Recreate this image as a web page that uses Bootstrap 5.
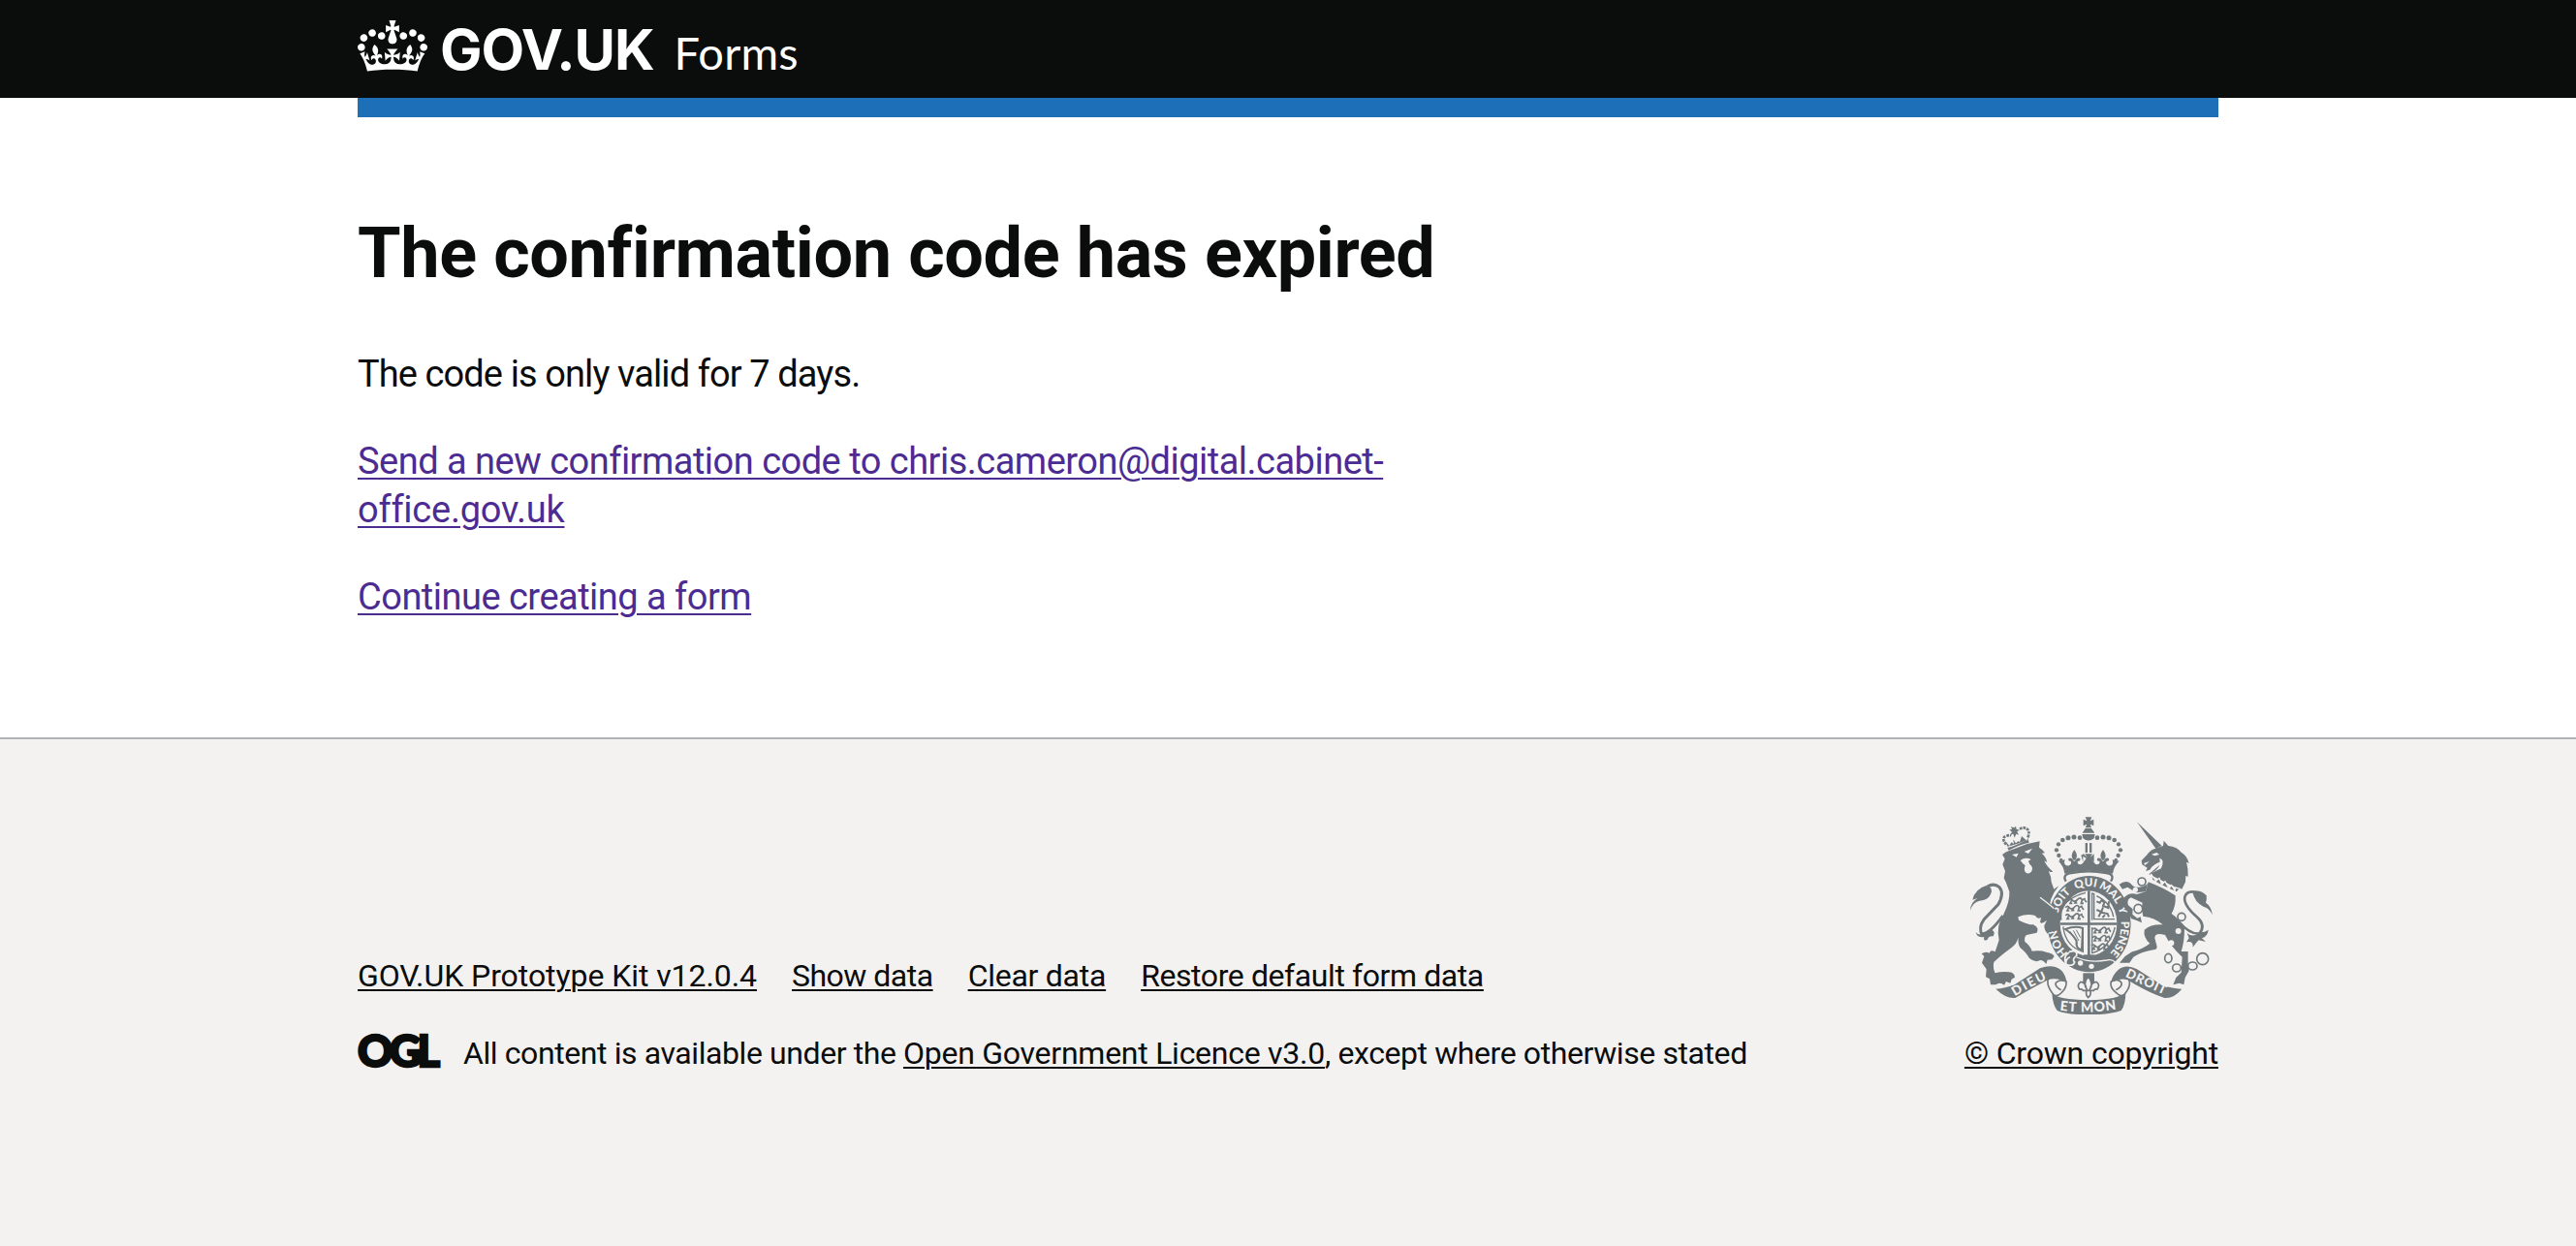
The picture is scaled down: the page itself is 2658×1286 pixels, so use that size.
<!DOCTYPE html>
<html lang="en">
<head>
<meta charset="utf-8">
<title>The confirmation code has expired – GOV.UK Forms</title>
<link href="https://cdn.jsdelivr.net/npm/bootstrap@5.3.0/dist/css/bootstrap.min.css" rel="stylesheet">
<style>
  body{font-family:Roboto,"Liberation Sans",sans-serif;color:#0b0c0c;background:#f3f2f1;font-size:38px;line-height:50px}
  .page-width{width:1920px;margin-left:auto;margin-right:auto}
  .site-header{background:#0b0c0c;height:101px}
  .logo-link{color:#fff;padding-top:21px}
  .crown{width:72px;height:53px}
  .logotype{font:700 58px/58px Inter,sans-serif;letter-spacing:-1.1px;margin:1px 0 0 13px}
  .product{font:400 47px/58px Lato,sans-serif;letter-spacing:.2px;margin-left:21px}
  .brand-bar{height:20px;background:#1d70b8}
  .page-body{background:#fff;height:660px}
  .main-col{width:1260px;padding-top:103px}
  .page-title{font-size:72px;line-height:76px;font-weight:700;letter-spacing:-.38px;margin-bottom:61px}
  .main-col p{margin-bottom:40px}
  .main-col a{color:#4c2c92;text-decoration-thickness:2px;text-underline-offset:4px}
  .site-footer{border-top:2px solid #b1b4b6;padding-top:80px;font-size:32px;line-height:40px}
  .site-footer a{color:#0b0c0c;text-decoration-thickness:2px;text-underline-offset:3px}
  .meta-links{gap:36px;margin-bottom:40px}
  .ogl{width:109px;font:900 45px/34px Lato,sans-serif;letter-spacing:-3.8px;-webkit-text-stroke:2.4px #0b0c0c}
  .crest{width:250px;height:204px;margin-bottom:20px}
  .t5{letter-spacing:-.51px}.t9{letter-spacing:-.9px}.t4{letter-spacing:-.41px}.t3{letter-spacing:-.26px}.t2{letter-spacing:-.17px}.t1{letter-spacing:-.07px}.t0{letter-spacing:-.25px}
</style>
<script src="https://cdn.jsdelivr.net/npm/bootstrap@5.3.0/dist/js/bootstrap.bundle.min.js"></script>
</head>
<body>
<header class="site-header">
  <div class="page-width">
    <a class="logo-link d-flex align-items-start text-decoration-none" href="#">
      <svg class="crown" viewBox="0 0 132 97" aria-hidden="true"><path fill="#fff" fill-rule="evenodd" d="M25 30.2c3.5 1.5 7.7-.2 9.1-3.7 1.5-3.6-.2-7.8-3.9-9.2-3.6-1.4-7.6.3-9.1 3.9-1.4 3.5.3 7.5 3.9 9zM9 39.5c3.6 1.5 7.8-.2 9.2-3.7 1.5-3.6-.2-7.8-3.9-9.1-3.6-1.5-7.6.2-9.1 3.8-1.4 3.5.3 7.5 3.8 9zM4.4 57.2c3.5 1.5 7.7-.2 9.1-3.8 1.5-3.6-.2-7.7-3.9-9.1-3.5-1.5-7.6.3-9.1 3.8-1.4 3.5.3 7.6 3.9 9.1zm38.3-21.4c3.5 1.5 7.7-.2 9.1-3.8 1.5-3.6-.2-7.7-3.9-9.1-3.6-1.5-7.6.3-9.1 3.8-1.3 3.6.4 7.7 3.9 9.1zm64.4-5.6c-3.6 1.5-7.8-.2-9.1-3.7-1.5-3.6.2-7.8 3.8-9.2 3.6-1.4 7.7.3 9.2 3.9 1.3 3.5-.4 7.5-3.9 9zm15.9 9.3c-3.6 1.5-7.7-.2-9.1-3.7-1.5-3.6.2-7.8 3.7-9.1 3.6-1.5 7.7.2 9.2 3.8 1.5 3.5-.3 7.5-3.8 9zm4.7 17.7c-3.6 1.5-7.8-.2-9.2-3.8-1.5-3.6.2-7.7 3.9-9.1 3.6-1.5 7.7.3 9.2 3.8 1.3 3.5-.4 7.6-3.9 9.1zM89.3 35.8c-3.6 1.5-7.8-.2-9.2-3.8-1.4-3.6.2-7.7 3.9-9.1 3.6-1.5 7.7.3 9.2 3.8 1.4 3.6-.3 7.7-3.9 9.1zM69.7 17.7l8.9 4.7V9.3l-8.9 2.8c-.2-.3-.5-.6-.9-.9L72.4 0H59.6l3.5 11.2c-.3.3-.6.5-.9.9l-8.8-2.8v13.1l8.8-4.7c.3.3.6.7.9.9l-5 15.4v.1c-.2.8-.4 1.6-.4 2.4 0 4.1 3.1 7.5 7 8.1h.2c.3 0 .7.1 1 .1.4 0 .7 0 1-.1h.2c4-.6 7.1-4.1 7.1-8.1 0-.8-.1-1.7-.4-2.4V34l-5.1-15.4c.4-.2.7-.6 1-.9zM66 92.8c16.9 0 32.8 1.1 47.1 3.2 4-16.9 8.9-26.7 14-33.5l-9.6-3.4c1 4.9 1.1 7.2 0 10.2-1.5-1.4-3-4.3-4.2-8.7L108.6 76c2.8-2 5-3.2 7.5-3.3-4.4 9.4-10 11.9-13.6 11.2-4.3-.8-6.3-4.6-5.6-7.9 1-4.7 5.7-5.9 8-.5 4.3-8.7-3-11.4-7.6-8.8 7.1-7.2 7.9-13.5 2.1-21.1-8 6.1-8.1 12.3-4.5 20.8-4.7-5.4-12.1-2.5-9.5 6.2 3.4-5.2 7.9-2 7.2 3.1-.6 4.3-6.4 7.8-13.5 7.2-10.3-.9-10.9-8-11.2-13.8 2.5-.5 7.1 1.8 11 7.3L80.2 60c-4.1 4.4-8 5.3-12.3 5.4 1.4-4.4 8-11.6 8-11.6H55.5s6.4 7.2 7.9 11.6c-4.2-.1-8-1-12.3-5.4l1.4 16.4c3.9-5.5 8.5-7.7 10.9-7.3-.3 5.8-.9 12.8-11.1 13.8-7.2.6-12.9-2.9-13.5-7.2-.7-5 3.8-8.3 7.1-3.1 2.7-8.7-4.6-11.6-9.4-6.2 3.7-8.5 3.6-14.7-4.6-20.8-5.8 7.6-5 13.9 2.2 21.1-4.7-2.6-11.9.1-7.7 8.8 2.3-5.5 7.1-4.2 8.1.5.7 3.3-1.3 7.1-5.7 7.9-3.5.7-9-1.8-13.5-11.2 2.5.1 4.7 1.3 7.5 3.3l-4.7-15.4c-1.2 4.4-2.7 7.2-4.3 8.7-1.1-3-.9-5.3 0-10.2l-9.5 3.4c5 6.9 9.9 16.7 14 33.5 14.8-2.1 30.8-3.2 47.7-3.2z"/></svg>
      <span class="d-flex align-items-baseline"><span class="logotype">GOV.UK</span><span class="product">Forms</span></span>
    </a>
  </div>
</header>
<div class="page-body">
  <div class="page-width">
    <div class="brand-bar"></div>
    <main class="main-col">
      <h1 class="page-title">The confirmation code has expired</h1>
      <p class="t9">The code is only valid for 7 days.</p>
      <p><a href="#"><span class="t5">Send a new confirmation code to chris.cameron@digital.cabinet-</span><span class="t0">office.gov.uk</span></a></p>
      <p class="t5"><a href="#">Continue creating a form</a></p>
    </main>
  </div>
</div>
<footer class="site-footer">
  <div class="page-width d-flex justify-content-between align-items-end">
    <div>
      <div class="meta-links d-flex">
        <a class="t1" href="#">GOV.UK Prototype Kit v12.0.4</a>
        <a class="t5" href="#">Show data</a>
        <a class="t3" href="#">Clear data</a>
        <a class="t4" href="#">Restore default form data</a>
      </div>
      <div class="d-flex">
        <span class="ogl">OGL</span>
        <div><span class="t4">All content is available under the </span><a class="t3" href="#">Open Government Licence v3.0</a><span class="t4">, except where otherwise stated</span></div>
      </div>
    </div>
    <div class="d-flex flex-column align-items-center">
      <svg class="crest" viewBox="69 68 750 612" fill="#70787b" role="img">
        <defs>
          <path id="garterLine" d="M436 519A100 118 0 0 1 436 283A100 118 0 0 1 436 519"/>
          <path id="ribbonL" d="M207 624Q262 590 318 566"/>
          <path id="ribbonR" d="M547 562Q610 592 672 620"/>
          <path id="ribbonM" d="M346 667Q435 679 524 664"/>
          <g id="fleur"><path d="M0-33Q-14-15-3-1H3Q14-15 0-33ZM-18-6Q-8-12-2 2V14H2V2Q8-12 18-6Q20 4 11 2Q8 8 8 18H-8Q-8 8-11 2Q-20 4-18-6Z"/></g>
          <g id="beast" fill="none" stroke="#70787b" stroke-width="5"><path d="M0 4q6-8 12 0t16-2t14 2l10-5M10 4l-5 10h7M26 4l-6 9h7M42 4l-3 10h8M50 3l6 8" /></g>
        </defs>
        <!-- crown -->
        <path d="M425 69h20l-5 12 11-5v20l-11-5 4 11h-19l5-11-11 5V76l11 5zM425 104h19l10 14h-38zM415 122h40l-3 13q-17 13-34 0zM425 149h7v30h-7zM438 149h7v30h-7z"/>
        <g><circle cx="408" cy="133" r="7"/><circle cx="390" cy="131" r="7.5"/><circle cx="372" cy="133" r="7.5"/><circle cx="355" cy="140" r="7"/><circle cx="342" cy="153" r="6.5"/><circle cx="336" cy="171" r="6.5"/><circle cx="343" cy="188" r="6.5"/><circle cx="350" cy="201" r="5"/>
        <circle cx="462" cy="133" r="7"/><circle cx="480" cy="131" r="7.5"/><circle cx="498" cy="133" r="7.5"/><circle cx="515" cy="140" r="7"/><circle cx="528" cy="153" r="6.5"/><circle cx="534" cy="171" r="6.5"/><circle cx="527" cy="188" r="6.5"/><circle cx="520" cy="201" r="5"/></g>
        <path d="M342 205L362 201Q357 216 367 219Q380 222 384 205L398 205Q405 222 417 212L428 197 418 190V208L412 187 420 183 431 194 424 183H447L440 194 452 183V208L443 197 454 212Q465 222 472 205L486 205Q492 222 504 219Q513 216 509 201L530 205Q514 220 510 244Q435 226 361 244Q358 220 342 205Z"/>
        <use href="#fleur" x="391" y="203"/><use href="#fleur" x="480" y="203"/>
        <path d="M365 268Q352 246 382 242Q435 232 490 242Q518 246 504 268" fill="#f3f2f1" stroke="#70787b" stroke-width="7"/>
        <!-- garter and shield -->
        <ellipse cx="437" cy="400" rx="129" ry="149"/>
        <ellipse cx="435" cy="398" rx="88" ry="101" fill="#f3f2f1"/>
        <path d="M432 297h8v200h-8zM347 396h177v7H347z"/>
        <path d="M350 388V360Q362 320 426 303M446 303V388M446 306H452V385H516M460 313Q505 335 512 378M357 408V413Q366 470 418 486V410M446 410V490Q500 475 517 410" fill="none" stroke="#70787b" stroke-width="4"/>
        <use href="#beast" x="373" y="322"/><use href="#beast" x="364" y="345"/><use href="#beast" x="364" y="370"/>
        <use href="#beast" x="448" y="413"/><use href="#beast" x="448" y="438"/><use href="#beast" x="444" y="464"/>
        <path d="M460 330l10 4 6-8 8 8-4 10 16 6 2-20M466 378l8-16-14-6M480 348l-6 16 20 4 4 10M486 372l-8 8" fill="none" stroke="#70787b" stroke-width="6"/>
        <path d="M363 416Q395 404 417 413L414 480Q394 476 398 452Q385 430 363 416Z" fill="none" stroke="#70787b" stroke-width="6"/><path d="M378 423L401 460M388 420L405 452M397 418L410 442" stroke="#70787b" stroke-width="3"/>
        <path d="M420 495h34v12h-34z"/>
        <path d="M375 488Q355 500 365 525M375 486Q402 478 398 498Q382 510 392 518Q388 532 366 526Q362 508 378 502" fill="none" stroke="#f3f2f1" stroke-width="5"/>
        <path d="M398 503Q440 522 492 512Q510 508 520 522" fill="none" stroke="#f3f2f1" stroke-width="4"/>
        <circle cx="410" cy="521" r="8" fill="#f3f2f1"/><circle cx="444" cy="531" r="8" fill="#f3f2f1"/>
        <g fill="#f3f2f1" font-family="Lato" font-weight="900" font-size="35" text-anchor="middle">
          <text><textPath href="#garterLine" startOffset="16.5%">HON</textPath></text><text><textPath href="#garterLine" startOffset="35.5%">SOIT</textPath></text><text><textPath href="#garterLine" startOffset="48.6%">QUI</textPath></text><text><textPath href="#garterLine" startOffset="60%">MAL</textPath></text><text><textPath href="#garterLine" startOffset="69%">Y</textPath></text><text><textPath href="#garterLine" startOffset="81.5%" textLength="108">PENSE</textPath></text>
        </g>
        <!-- lion -->
        <path d="M168 185L180 177 245 152 284 144 282 163Q292 168 300 180L290 181Q303 191 307 209L298 204Q305 222 325 238Q316 241 311 235Q320 253 320 270L328 292 343 282Q328 300 319 322L316 335 328 350 340 366 344 390 343 424Q335 412 328 426Q324 418 318 417L308 430Q298 420 298 405L306 388Q290 402 285 394L288 380Q276 386 270 374Q245 367 217 378L219 388Q246 402 264 402Q284 412 275 427L243 434Q235 440 238 455Q254 466 260 484Q285 480 304 487Q324 490 329 500L322 510 308 511 304 524Q292 508 280 514Q268 519 252 506Q238 484 224 474Q215 462 218 440Q214 462 194 475Q162 498 142 518Q138 536 146 552Q168 546 190 549Q206 551 207 565L197 571 193 583 180 578 174 589Q160 578 148 588L132 588 129 570 117 564 119 540 105 520 112 500 104 492Q116 484 128 490Q132 478 146 486L158 450Q148 405 172 370Q192 330 190 300L180 272 173 258 177 236 169 216 176 198Z"/>
        <path d="M285 318Q312 338 328 352" fill="none" stroke="#f3f2f1" stroke-width="4"/>
        <path d="M198 185l20-4-6 12zM236 176l25-10-12 16zM224 203q15-12 33-3l-8 5 4 10q12 8 6 22-10 12-20 2-5-8 0-20l-8-7z" fill="#f3f2f1"/>
        <path d="M184 164Q210 158 248 138L251 148Q220 154 188 172ZM178 143L190 158 196 147 204 152 202 138 210 150 218 143 222 147 228 128 244 142 248 132V138Q210 156 184 160Z"/>
        <path d="M180 154Q164 134 179 128Q189 124 196 126M247 132Q256 112 241 103Q230 100 219 108" fill="none" stroke="#70787b" stroke-width="8" stroke-dasharray="8 3"/>
        <path d="M195 99l10 3 5-5 2 9 9 3-7 5 5 10-8-3-5 12-4-12-9 2 5-8-8-7 8-1z"/>
        <path d="M107 438Q92 412 112 385L156 339Q175 304 159 286Q142 272 122 284M105 430Q130 430 170 374" fill="none" stroke="#70787b" stroke-width="9"/>
        <path d="M69 358Q70 332 92 320L76 325Q83 292 118 281Q142 286 132 308Q124 326 98 328Q76 333 69 358ZM86 426Q98 438 110 428L130 417Q150 422 140 438Q126 436 122 448Q108 456 112 440Q90 444 86 426Z"/>
        <!-- unicorn -->
        <path d="M585 84L662 158 643 166ZM643 166L666 158 668 142 682 158Q708 160 722 178Q740 188 746 212L738 208Q744 228 743 254L736 250 735 270 724 292 705 286 622 246 650 222 664 206Q636 212 625 232L612 236 617 226 601 216 599 204 616 186Q628 168 643 166Z"/>
        <path d="M630 184l16-5 8 6-14 4zM606 212l18-6-14 12zM655 196Q672 200 660 228L630 242Q662 226 655 196Z" fill="#f3f2f1"/>
        <path d="M628 245L632 264Q660 282 708 302L718 291 705 287 702 296 692 280 684 290 672 268 662 279 654 258 644 267Z" fill="#70787b" stroke="#f3f2f1" stroke-width="4"/>
        <path d="M620 270Q668 288 704 312Q706 345 692 368Q716 384 732 414Q732 456 722 485H743V530L746 545 734 566 730 588 716 583 697 588 706 566 722 550 725 502Q690 470 672 434Q640 424 640 444L646 466Q650 478 636 480Q600 486 574 502L562 520H531L548 500 570 486Q606 476 625 460Q604 442 608 418Q628 400 665 402Q640 380 604 376Q598 350 602 334L566 318Q552 326 558 342L572 354 571 370 586 382 596 378 600 396 582 388 568 384 554 360 538 338 542 322Q560 300 584 308L612 300Z"/>
        <path d="M612 300L582 303 556 286 540 292 530 277Q548 264 562 272L575 284Q596 292 618 275Z"/>
        <g fill="#f3f2f1"><circle cx="713" cy="422" r="9"/><circle cx="691" cy="459" r="9"/><circle cx="580" cy="294" r="8"/></g>
        <g fill="#f3f2f1" stroke="#70787b" stroke-width="5"><ellipse cx="600" cy="269" rx="12" ry="12"/><ellipse cx="589" cy="353" rx="13" ry="14"/><circle cx="723" cy="378" r="12"/><ellipse cx="682" cy="506" rx="11" ry="14"/><ellipse cx="708" cy="536" rx="13" ry="12"/><ellipse cx="757" cy="530" rx="14" ry="12"/><circle cx="788" cy="508" r="18"/></g>
        <path d="M714 392Q748 432 778 430Q800 404 770 378Q728 340 733 316Q740 294 770 302" fill="none" stroke="#70787b" stroke-width="8"/>
        <path d="M757 300Q782 292 800 312Q802 326 798 334Q814 344 819 372Q806 348 792 347Q762 332 757 300ZM740 428Q758 444 780 426L795 424 806 418Q804 438 786 444L798 455 776 450Q768 458 758 472Q760 450 738 456L746 444Z"/>
        <!-- ribbon -->
        <path d="M148 601Q176 600 206 588L285 537Q325 522 350 543Q362 554 367 577L350 574Q330 566 307 574Q250 604 208 629Q180 632 148 601ZM724 601Q700 602 660 588L585 540Q550 522 526 543Q508 560 505 580L530 572Q550 566 568 580Q620 612 670 629Q698 632 724 601Z"/>
        <path d="M310 572Q304 590 326 618Q336 628 350 614Q368 598 366 578Q345 570 334 582Q330 594 350 604M560 572Q568 592 546 618Q536 628 522 614Q500 598 505 578Q528 566 537 582Q540 594 520 604" fill="none" stroke="#70787b" stroke-width="5"/>
        <path d="M322 615Q340 634 435 636Q530 634 550 612Q550 650 536 668Q500 681 435 681Q366 681 338 668Q324 650 322 615Z"/>
        <g fill="#f3f2f1" font-family="Lato" font-weight="900" font-size="40"><text><textPath href="#ribbonL" textLength="112">DIEU</textPath></text><text><textPath href="#ribbonR" textLength="134">DROIT</textPath></text><text font-size="42"><textPath href="#ribbonM" textLength="176">ET MON</textPath></text></g>
        <path d="M418 552h35v30h-35z"/>
        <path d="M434 562Q416 585 430 602Q424 620 434 628Q446 620 439 602Q452 585 434 562ZM428 598Q424 578 410 580Q398 588 407 602Q416 600 418 606H451Q454 600 462 602Q472 588 460 580Q445 578 441 598" fill="#f3f2f1" stroke="#70787b" stroke-width="5"/>
      </svg>
      <a class="t2" href="#">© Crown copyright</a>
    </div>
  </div>
</footer>
</body>
</html>
